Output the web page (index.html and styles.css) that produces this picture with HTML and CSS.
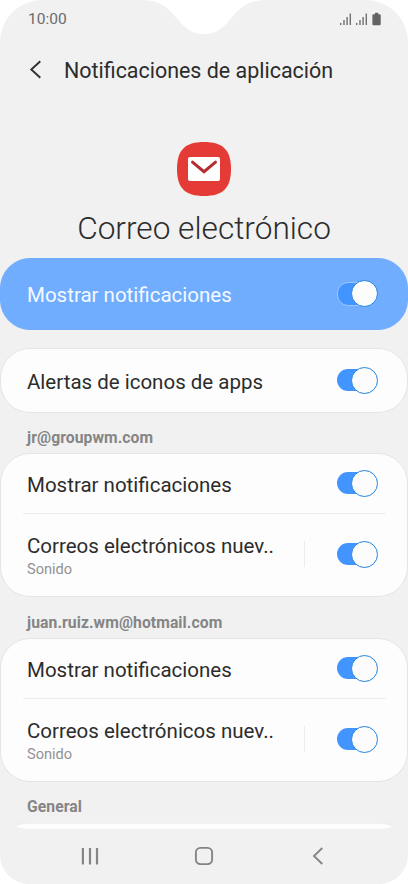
FILE: index.html
```
<!DOCTYPE html>
<html lang="es">
<head>
<meta charset="utf-8">
<title>Notificaciones de aplicación</title>
<link rel="stylesheet" href="styles.css">
</head>
<body>
<div class="phone">
  <svg class="notch" width="124" height="35" viewBox="0 0 124 35"><path d="M0 0C17 .5 25 6 34 17.500C43 28 49 34 62 34C75 34 81 28 90 17.500C99 6 107 .5 124 0Z" fill="#fff"/></svg>
  <header class="status">
    <span>10:00</span>
    <svg width="43" height="14" viewBox="0 0 43 14" fill="#707070"><path d="M1 11h1.400v2H1zM4.300 8h1.400v5H4.300zM7.400 5h1.400v8H7.400zM10.600 1.500H12V13h-1.400zM17 11h1.400v2H17zM20.300 8h1.400v5h-1.400zM23.400 5h1.400v8h-1.400zM26.600 1.500H28V13h-1.400z"/><path fill="#636363" d="M36 .7h3.300v1.500h1.400q1 0 1 1v9q0 1-1 1h-6.300q-1 0-1-1v-9q0-1 1-1H36z"/></svg>
  </header>
  <div class="appbar">
    <svg width="14" height="20" viewBox="0 0 14 20" fill="none" stroke="#303030" stroke-width="1.900"><path d="M12.300 1.200L3.300 9.500 12.300 17.800"/></svg>
    <h1>Notificaciones de aplicación</h1>
  </div>
  <section class="hero">
    <svg width="54" height="54" viewBox="0 0 54 54"><path d="M27 0C46 0 54 8 54 27S46 54 27 54 0 46 0 27 8 0 27 0Z" fill="#e53b36"/><rect x="11" y="15" width="32" height="24" rx="2" fill="#fff"/><path d="M15.500 20.200L27 29.700 38.500 20.200" fill="none" stroke="#b52b30" stroke-width="3" stroke-linecap="round"/></svg>
    <h2>Correo electrónico</h2>
  </section>
  <main>
    <div class="card primary"><div class="row"><span class="label">Mostrar notificaciones</span><i class="switch"></i></div></div>
    <div class="card badges"><div class="row"><span class="label apps">Alertas de iconos de apps</span><i class="switch"></i></div></div>
    <h3>jr@groupwm.com</h3>
    <div class="card account">
      <div class="row"><span class="label">Mostrar notificaciones</span><i class="switch"></i></div>
      <div class="row detail"><div class="copy"><span class="label">Correos electrónicos nuev..</span><small>Sonido</small></div><i class="switch"></i></div>
    </div>
    <h3>juan.ruiz.wm@hotmail.com</h3>
    <div class="card account">
      <div class="row"><span class="label">Mostrar notificaciones</span><i class="switch"></i></div>
      <div class="row detail"><div class="copy"><span class="label">Correos electrónicos nuev..</span><small>Sonido</small></div><i class="switch"></i></div>
    </div>
    <h3 class="general">General</h3>
    <svg class="next" width="378" height="6" viewBox="0 0 378 6"><path d="M0 3Q5 .5 12 0H366Q373 .5 378 3Q373 5.700 366 6H12Q5 5.700 0 3Z" fill="#fdfdfd"/><path d="M0 3Q5 .5 12 .2H366Q373 .5 378 3" fill="none" stroke="#e3e3e3" stroke-width=".6"/></svg>
  </main>
  <nav>
    <svg width="18" height="18" viewBox="0 0 18 18" fill="#858585"><rect x=".8" y="1" width="2.200" height="16.500" rx=".5"/><rect x="7.900" y="1" width="2.200" height="16.500" rx=".5"/><rect x="14.900" y="1" width="2.200" height="16.500" rx=".5"/></svg>
    <svg width="20" height="20" viewBox="0 0 20 20" fill="none" stroke="#858585" stroke-width="1.900"><rect x="1.900" y="1.900" width="16.200" height="16.200" rx="4.500"/></svg>
    <svg width="12" height="18" viewBox="0 0 12 18" fill="none" stroke="#858585" stroke-width="1.900"><path d="M10.300 1L2 9l8.300 8"/></svg>
  </nav>
</div>
</body>
</html>
```
FILE: styles.css
```
* { box-sizing: border-box; }
body { margin: 0; background: #fff; font-family: Roboto, sans-serif; color: #2c2c2c; }
h1, h2, h3 { margin: 0; font-weight: 400; white-space: nowrap; }
svg { display: block; flex: none; }
.phone { position: relative; width: 408px; height: 884px; overflow: hidden; background: #f1f1f1; border-radius: 42px 42px 29px 29px; display: flex; flex-direction: column; }
.notch { position: absolute; top: 0; left: 142px; }
.status { height: 38px; padding: 0 26px 0 28px; display: flex; justify-content: space-between; align-items: center; font-size: 15.500px; color: #6b6b6b; }
.appbar { height: 64px; padding-left: 28px; display: flex; align-items: center; gap: 22px; }
h1 { font-size: 21.450px; padding-top: 1px; }
.hero { height: 156px; padding-top: 40px; display: flex; flex-direction: column; align-items: center; }
h2 { margin-top: 13px; font-size: 31.600px; line-height: 40px; font-weight: 300; }
main { height: 571px; overflow: hidden; }
.card { background: #fdfdfd; border: 1px solid #e5e5e5; border-radius: 30px; width: 408px; }
.row { display: flex; align-items: center; justify-content: space-between; padding: 0 29px 0 26px; }
.label { font-size: 20.500px; line-height: 24px; white-space: nowrap; padding-top: 1px; }
.badges .label, .account .row:first-child .label { padding-top: 2px; }
.primary { height: 72px; background: #70adff; border-color: #70adff; color: #f4f9ff; margin-bottom: 18px; }
.primary .row { height: 70px; }
.badges { height: 65px; }
.badges .row { height: 63px; }
h3 { height: 40px; padding: 15px 0 0 27px; font-size: 15.700px; letter-spacing: .08px; line-height: 20px; font-weight: 700; color: #858585; }
.account { height: 144px; margin-bottom: 1px; }
.account .row:first-child { height: 59px; }
.detail { height: 83px; position: relative; }
.detail::before { content: ""; position: absolute; top: 0; left: 22px; right: 21px; height: 1px; background: #ededed; }
.detail::after { content: ""; position: absolute; left: 303px; top: 28px; width: 1px; height: 26px; background: #ececec; }
.copy { display: flex; flex-direction: column; padding-top: 3px; }
small { font-size: 14.600px; line-height: 20px; padding-top: 1px; color: #929292; }
.switch { position: relative; flex: none; width: 41px; height: 26px; margin-bottom: 2px; }
.switch::before { content: ""; position: absolute; left: 0; top: 2px; width: 36px; height: 22px; border-radius: 11px; background: #4294ff; }
.primary .switch::before { border: 1px solid #9cc8ff; }
.switch::after { content: ""; position: absolute; right: 0; top: 0; width: 25px; height: 25px; border-radius: 50%; background: #fcfcfc; border: 1px solid #2381df; }
.general { height: 41px; padding-top: 14px; }
.next { margin: -1px auto 0; }
nav { flex: 1; padding: 0 84px 2px 81px; display: flex; align-items: center; justify-content: space-between; }
nav svg:nth-child(2) { margin-left: -3px; }
```
